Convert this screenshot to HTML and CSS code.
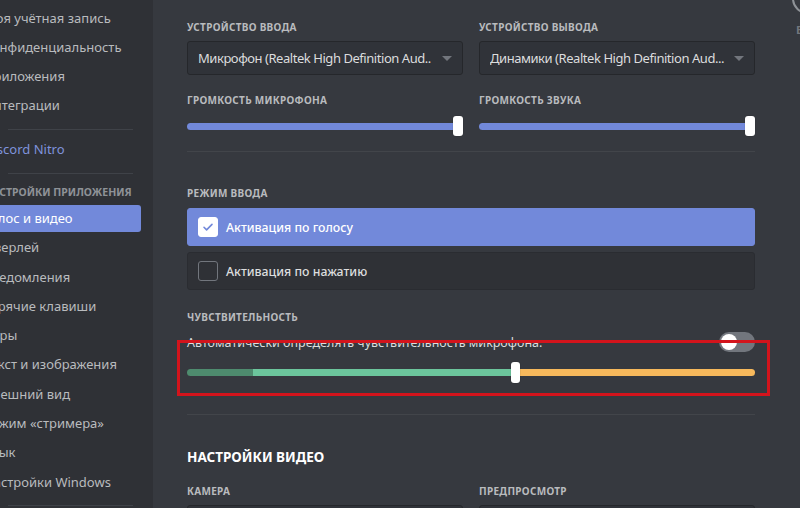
FILE: index.html
```html
<!DOCTYPE html>
<html lang="ru">
<head>
    <meta charset="UTF-8">
    <meta name="viewport" content="width=device-width, initial-scale=1.0">
    <title>Голос и видео</title>
    <link rel="stylesheet" href="styles.css">
</head>
<body>
    <div class="app">
        <nav class="sidebar">
            <div class="nav">
                <div class="nav-item">Моя учётная запись</div>
                <div class="nav-item">Конфиденциальность</div>
                <div class="nav-item">Приложения</div>
                <div class="nav-item">Интеграции</div>
                <div class="nav-sep"></div>
                <div class="nav-item nitro">Discord Nitro</div>
                <div class="nav-sep"></div>
                <div class="nav-header">Настройки приложения</div>
                <div class="nav-item active">Голос и видео</div>
                <div class="nav-item">Оверлей</div>
                <div class="nav-item">Уведомления</div>
                <div class="nav-item">Горячие клавиши</div>
                <div class="nav-item">Игры</div>
                <div class="nav-item">Текст и изображения</div>
                <div class="nav-item">Внешний вид</div>
                <div class="nav-item">Режим «стримера»</div>
                <div class="nav-item">Язык</div>
                <div class="nav-item">Настройки Windows</div>
                <div class="nav-sep"></div>
            </div>
        </nav>

        <main class="content">
            <!-- устройства -->
            <div class="columns">
                <div class="column">
                    <div class="label">Устройство ввода</div>
                    <div class="select">
                        <span class="select-text">Микрофон (Realtek High Definition Aud..</span>
                        <span class="caret"></span>
                    </div>
                    <div class="label label-gap">Громкость микрофона</div>
                    <div class="slider">
                        <div class="track"></div>
                        <div class="handle"></div>
                    </div>
                </div>
                <div class="column">
                    <div class="label">Устройство вывода</div>
                    <div class="select">
                        <span class="select-text">Динамики (Realtek High Definition Aud...</span>
                        <span class="caret"></span>
                    </div>
                    <div class="label label-gap">Громкость звука</div>
                    <div class="slider">
                        <div class="track"></div>
                        <div class="handle"></div>
                    </div>
                </div>
            </div>

            <div class="divider"></div>

            <!-- режим ввода -->
            <div class="label mode-label">Режим ввода</div>
            <div class="radio checked">
                <span class="checkbox">
                    <svg width="12" height="12" viewBox="0 0 12 12"><path d="M2 6.3l2.6 2.6L10 3.4" fill="none" stroke="#7289da" stroke-width="1.6" stroke-linecap="round" stroke-linejoin="round"/></svg>
                </span>
                Активация по голосу
            </div>
            <div class="radio">
                <span class="checkbox"></span>
                Активация по нажатию
            </div>

            <!-- чувствительность -->
            <div class="sensitivity">
                <div class="label">Чувствительность</div>
                <div class="auto-row">
                    <span>Автоматически определять чувствительность микрофона.</span>
                    <span class="toggle"><span class="knob"></span></span>
                </div>
                <div class="sens-slider">
                    <div class="sens-track">
                        <span class="seg seg-dark"></span>
                        <span class="seg seg-green"></span>
                        <span class="seg seg-yellow"></span>
                    </div>
                    <div class="sens-handle"></div>
                </div>
                <div class="highlight-box"></div>
            </div>

            <div class="divider divider-low"></div>

            <!-- видео -->
            <h2 class="section-title">Настройки видео</h2>
            <div class="columns">
                <div class="column">
                    <div class="label">Камера</div>
                    <div class="video-box"></div>
                </div>
                <div class="column">
                    <div class="label">Предпросмотр</div>
                    <div class="video-box"></div>
                </div>
            </div>
        </main>

        <div class="tools">
            <div class="close-btn">
                <svg width="14" height="14" viewBox="0 0 14 14"><path d="M2 2l10 10M12 2L2 12" stroke="#8e9297" stroke-width="1.8"/></svg>
            </div>
            <div class="esc">ESC</div>
        </div>
    </div>
</body>
</html>
```

FILE: styles.css
```css
body {
    margin: 0;
    font-family: 'Noto Sans', 'Open Sans', sans-serif;
    background-color: #36393f;
    color: #dcddde;
    overflow: hidden;
}

.app {
    display: flex;
    width: 800px;
    height: 508px;
    overflow: hidden;
}

/* боковое меню */
.sidebar {
    flex: 0 0 auto;
    width: 141px;
    padding: 4.5px 12px 0 0;
    background-color: #2f3136;
}

.nav {
    display: flex;
    flex-direction: column;
    margin-left: -28px;
}

.nav-item {
    height: 27px;
    line-height: 27px;
    margin-bottom: 2.3px;
    padding-left: 12px;
    font-size: 13px;
    color: #b9bbbe;
    white-space: nowrap;
    border-radius: 3px;
}

.nav-item.active {
    background-color: #7289da;
    color: #fff;
}

.nav-item.nitro {
    color: #7f93dc;
}

.nav-sep {
    flex: 0 0 1px;
    margin: 7px 8px 6.8px 36px;
    background-color: #3f4248;
}

.nav-header {
    margin: 4.4px 0 6px 12px;
    line-height: 14px;
    font-size: 10.5px;
    font-weight: 700;
    text-transform: uppercase;
    color: #8e9297;
    white-space: nowrap;
}

/* основная часть */
.content {
    flex: 0 0 auto;
    width: 568px;
    margin-left: 34px;
    padding-top: 20px;
}

.columns {
    display: grid;
    grid-template-columns: 276px 276px;
    column-gap: 16px;
}

.label {
    line-height: 14px;
    font-size: 10px;
    font-weight: 700;
    letter-spacing: 0.3px;
    text-transform: uppercase;
    color: #b9bbbe;
    white-space: nowrap;
}

.label-gap {
    margin-top: 18px;
}

.select {
    display: flex;
    align-items: center;
    height: 34px;
    margin-top: 7px;
    padding: 0 10px;
    box-sizing: border-box;
    background-color: #303339;
    border: 1px solid #25272b;
    border-radius: 3px;
}

.select-text {
    flex: 1;
    font-size: 13px;
    letter-spacing: -0.45px;
    color: #dcddde;
    white-space: nowrap;
    overflow: hidden;
}

.caret {
    width: 0;
    height: 0;
    margin-left: 6px;
    border-left: 5px solid transparent;
    border-right: 5px solid transparent;
    border-top: 5px solid #72767d;
}

.slider {
    display: flex;
    align-items: center;
    height: 20px;
    margin-top: 9px;
}

.track {
    flex: 1;
    height: 7px;
    margin-right: -4px;
    background-color: #7289da;
    border-radius: 4px;
}

.handle {
    position: relative;
    width: 10px;
    height: 20px;
    background-color: #fff;
    border-radius: 3px;
    box-shadow: 0 0 1px rgba(0, 0, 0, 0.4);
}

.divider {
    height: 1px;
    margin: 15px 0 34px;
    background-color: #42454a;
}

.divider-low {
    margin: 30px 0 0;
}

.mode-label {
    margin-bottom: 8px;
}

.radio {
    display: flex;
    align-items: center;
    height: 38px;
    margin-bottom: 6px;
    padding-left: 10px;
    box-sizing: border-box;
    background-color: #2f3136;
    border: 1px solid #2a2c31;
    border-radius: 3px;
    font-size: 12.3px;
    font-weight: 500;
    color: #dcddde;
}

.radio.checked {
    background-color: #7289da;
    border-color: #7289da;
    color: #fff;
}

.checkbox {
    display: flex;
    align-items: center;
    justify-content: center;
    width: 20px;
    height: 20px;
    margin-right: 8px;
    box-sizing: border-box;
    border: 1px solid #72767d;
    border-radius: 3px;
}

.radio.checked .checkbox {
    background-color: #fff;
    border-color: #fff;
}

/* чувствительность */
.sensitivity {
    position: relative;
    margin-top: 20px;
}

.auto-row {
    display: flex;
    align-items: center;
    justify-content: space-between;
    height: 20px;
    margin-top: 8px;
    font-size: 12.5px;
    color: #dcddde;
}

.toggle {
    display: flex;
    align-items: center;
    width: 36px;
    height: 20px;
    padding: 0 2px;
    box-sizing: border-box;
    background-color: #72767d;
    border-radius: 10px;
}

.knob {
    width: 16px;
    height: 16px;
    background-color: #fff;
    border-radius: 50%;
}

.sens-slider {
    position: relative;
    height: 22px;
    margin-top: 10px;
}

.sens-track {
    display: flex;
    height: 7px;
    padding-top: 7px;
}

.seg {
    height: 7px;
}

.seg-dark {
    flex: 0 0 66px;
    background-color: #4e8b6e;
    border-radius: 4px 0 0 4px;
}

.seg-green {
    flex: 0 0 262px;
    background-color: #6cc59c;
}

.seg-yellow {
    flex: 1;
    background-color: #f7b95c;
    border-radius: 0 4px 4px 0;
}

.sens-handle {
    position: absolute;
    left: 324px;
    top: 0;
    width: 9px;
    height: 21px;
    background-color: #fff;
    border-radius: 3px;
    box-shadow: 0 0 1px rgba(0, 0, 0, 0.5);
}

.highlight-box {
    position: absolute;
    left: -10px;
    top: 30px;
    width: 587px;
    height: 50px;
    border: 3px solid #d3141c;
}

.section-title {
    margin: 32px 0 17px;
    line-height: 20px;
    font-size: 13.5px;
    font-weight: 700;
    text-transform: uppercase;
    color: #fff;
}

.video-box {
    height: 40px;
    margin-top: 7px;
    background-color: #303339;
    border: 1px solid #25272b;
    border-radius: 3px;
}

/* кнопка закрытия */
.tools {
    flex: 0 0 auto;
    margin-left: 37px;
    margin-top: -17px;
}

.close-btn {
    display: flex;
    align-items: center;
    justify-content: center;
    width: 31px;
    height: 31px;
    box-sizing: border-box;
    border: 2px solid #8e9297;
    border-radius: 50%;
}

.esc {
    margin-top: 8px;
    padding-left: 4px;
    font-size: 11px;
    font-weight: 700;
    color: #72767d;
}
```
